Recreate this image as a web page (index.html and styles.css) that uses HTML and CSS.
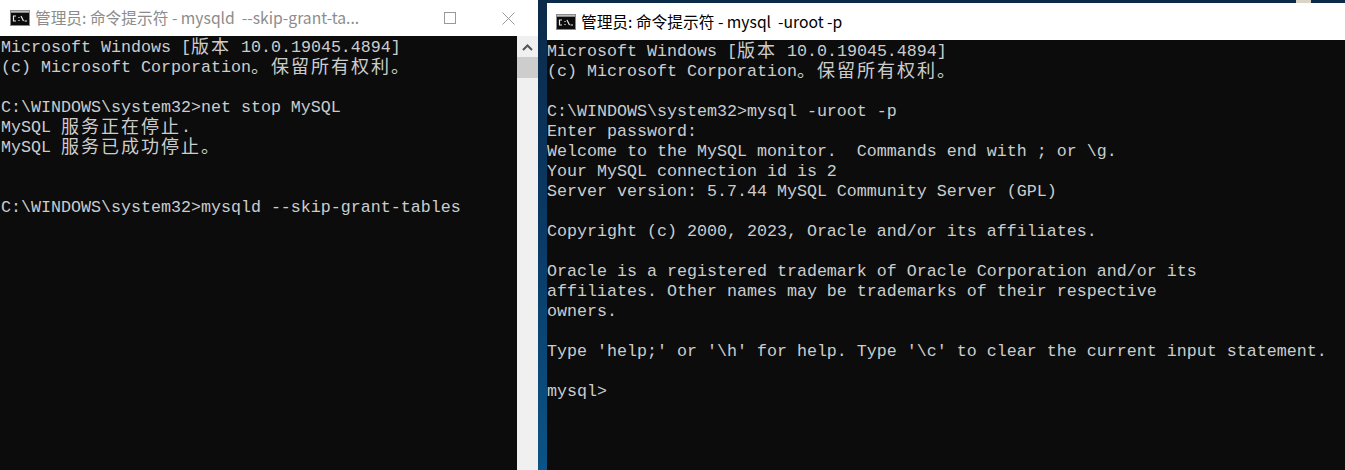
FILE: index.html
```html
<!DOCTYPE html>
<html lang="zh-CN">
<head>
<meta charset="utf-8">
<title>命令提示符</title>
<link rel="stylesheet" href="styles.css">
</head>
<body>
<section class="window window-left">
  <header class="titlebar titlebar-left">
    <svg class="app-icon" viewBox="0 0 20 16" width="20" height="16"><rect width="20" height="16" fill="#8a8a8a"/><rect x="1" y="3" width="18" height="12" fill="#0c0c0c"/><rect x="1" y="1" width="18" height="1" fill="#bdbdbd"/><path d="M6 6H3.5V11H6M9 7V8M9 10V11M11 6L13.5 11M14.5 11H17" fill="none" stroke="#e8e8e8" stroke-width="1.2"/></svg>
    <span class="title title-muted">管理员: 命令提示符 - mysqld&nbsp; --skip-grant-ta...</span>
    <div class="controls">
      <svg class="ctl" width="12" height="12" viewBox="0 0 12 12"><rect x="0.5" y="0.5" width="11" height="11" fill="none" stroke="#999"/></svg>
      <svg class="ctl" width="13" height="13" viewBox="0 0 13 13"><path d="M0.5 0.5L12.5 12.5M12.5 0.5L0.5 12.5" stroke="#999" fill="none"/></svg>
    </div>
  </header>
  <div class="content">
<pre class="terminal term-left">Microsoft Windows [<span class="cjk">版本</span> 10.0.19045.4894]
(c) Microsoft Corporation<span class="cjk">。保留所有权利。</span>

C:\WINDOWS\system32&gt;net stop MySQL
MySQL <span class="cjk">服务正在停止</span>.
MySQL <span class="cjk">服务已成功停止。</span>


C:\WINDOWS\system32&gt;mysqld --skip-grant-tables</pre>
    <div class="scrollbar">
      <svg class="arrow" width="11" height="7" viewBox="0 0 11 7"><path d="M1 6L5.5 1.5L10 6" fill="none" stroke="#555" stroke-width="2"/></svg>
      <div class="thumb"></div>
    </div>
  </div>
</section>
<section class="window window-right">
  <header class="titlebar titlebar-right">
    <svg class="app-icon" viewBox="0 0 20 16" width="20" height="16"><rect width="20" height="16" fill="#8a8a8a"/><rect x="1" y="3" width="18" height="12" fill="#0c0c0c"/><rect x="1" y="1" width="18" height="1" fill="#bdbdbd"/><path d="M6 6H3.5V11H6M9 7V8M9 10V11M11 6L13.5 11M14.5 11H17" fill="none" stroke="#e8e8e8" stroke-width="1.2"/></svg>
    <span class="title">管理员: 命令提示符 - mysql&nbsp; -uroot -p</span>
  </header>
<pre class="terminal term-right">Microsoft Windows [<span class="cjk">版本</span> 10.0.19045.4894]
(c) Microsoft Corporation<span class="cjk">。保留所有权利。</span>

C:\WINDOWS\system32&gt;mysql -uroot -p
Enter password:
Welcome to the MySQL monitor.  Commands end with ; or \g.
Your MySQL connection id is 2
Server version: 5.7.44 MySQL Community Server (GPL)

Copyright (c) 2000, 2023, Oracle and/or its affiliates.

Oracle is a registered trademark of Oracle Corporation and/or its
affiliates. Other names may be trademarks of their respective
owners.

Type 'help;' or '\h' for help. Type '\c' to clear the current input statement.

mysql&gt;</pre>
</section>
</body>
</html>
```

FILE: styles.css
```css
html, body {
  margin: 0;
  height: 470px;
  overflow: hidden;
}
body {
  display: flex;
  gap: 9px;
  background:
    linear-gradient(#d8d4c8, #d8d4c8) no-repeat 1296px 0 / 15px 3px,
    linear-gradient(180deg, #0c2a4a 0%, #0a3a66 50%, #0b5486 100%);
  font-family: "Noto Sans CJK SC", sans-serif;
}
.window {
  display: flex;
  flex-direction: column;
}
.window-left {
  width: 538px;
  flex: none;
}
.window-right {
  flex: 1;
  min-width: 0;
  margin-top: 3px;
}
.titlebar {
  display: flex;
  align-items: center;
  background: #fff;
  flex: none;
}
.titlebar-left {
  height: 36px;
  padding-left: 10px;
}
.titlebar-right {
  height: 37px;
  padding-left: 9px;
}
.app-icon {
  flex: none;
  margin-right: 5px;
}
.title {
  font-family: "Noto Sans CJK SC", "Liberation Sans", sans-serif;
  font-size: 15.7px;
  line-height: 20px;
  color: #000;
  white-space: pre;
}
.title-muted {
  color: #8c8c8c;
}
.controls {
  display: flex;
  align-items: center;
  margin-left: auto;
  gap: 46px;
  padding-right: 23px;
}
.content {
  flex: 1;
  display: flex;
  min-height: 0;
}
.terminal {
  margin: 0;
  flex: 1;
  min-width: 0;
  background: #0c0c0c;
  color: #cccccc;
  font-family: "Liberation Mono", monospace;
  font-size: 16.67px;
  line-height: 20px;
  white-space: pre;
  overflow: hidden;
}
.term-left {
  padding: 2px 0 0 1px;
}
.term-right {
  padding: 2px 0 0 0;
}
.cjk {
  font-family: "Noto Sans CJK SC", sans-serif;
  font-size: 18px;
  line-height: 0;
  letter-spacing: 2px;
  vertical-align: -1px;
}
.scrollbar {
  width: 21px;
  flex: none;
  background: #f0f0f0;
  display: flex;
  flex-direction: column;
  align-items: center;
}
.arrow {
  margin-top: 8px;
  margin-bottom: 6px;
}
.thumb {
  width: 100%;
  height: 21px;
  background: #cdcdcd;
}
```
